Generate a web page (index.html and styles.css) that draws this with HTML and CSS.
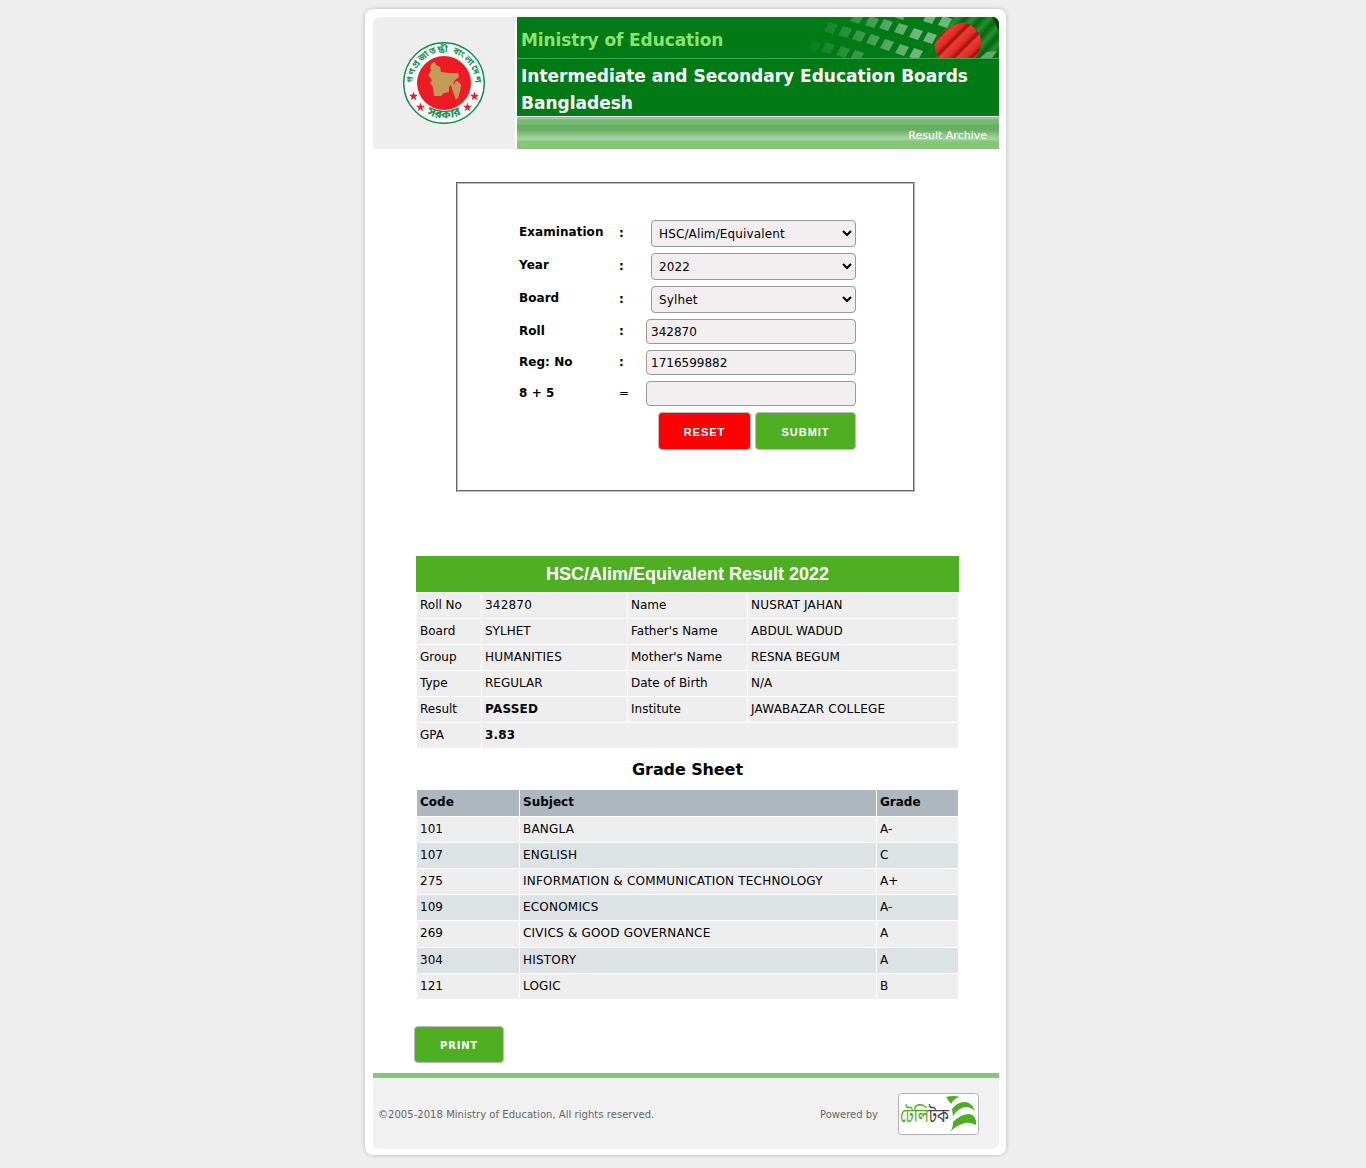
FILE: index.html
```html
<!DOCTYPE html>
<html lang="en">
<head>
<meta charset="utf-8">
<title>Intermediate and Secondary Education Boards Bangladesh</title>
<link rel="stylesheet" href="styles.css">
</head>
<body>
<div class="page">
  <header class="header">
    <div class="brand">
      <svg class="seal" viewBox="0 0 82 82" width="82" height="82">
        <circle cx="41" cy="41" r="40.3" fill="#fff" stroke="#16914f" stroke-width="1.5"/>
        <circle cx="41" cy="41" r="27" fill="#ed1c24"/>
        <path d="M29 21l3-1 1 3 4 2 1 5 8 1h9l1 4-4 3-2 4 4 1 2-3 2 3-1 7-2 5-2 3-3-8-2-7-2 2 0 5-5 1-3 3-7 0-1-9-3-4 2-3-4-5 3-4-1-4z" fill="#c49a5a"/>
        <path d="M52 40l3-1 1 9-1 9-2-5-2-8z" fill="#c49a5a"/>
        <path id="arcTop" d="M10 41a31 31 0 0 1 62 0" fill="none"/>
        <path id="arcBottom" d="M14 65a38 38 0 0 0 54 0" fill="none"/>
        <text class="seal-text"><textPath href="#arcTop" startOffset="0" textLength="97">গণপ্রজাতন্ত্রী বাংলাদেশ</textPath></text>
        <text class="seal-text low"><textPath href="#arcBottom" startOffset="50%" text-anchor="middle">সরকার</textPath></text>
        <g fill="#ed1c24">
          <path id="star" d="M10.500 49.500l1.100 3.300 3.400 0-2.700 2.100 1.100 3.400-2.900-2.100-2.900 2.100 1.100-3.400-2.700-2.100 3.400 0z"/>
          <use href="#star" x="7" y="11"/><use href="#star" x="61"/><use href="#star" x="54" y="11"/>
        </g>
      </svg>
    </div>
    <div class="banner">
      <div class="ministry">
        <span class="ministry-name">Ministry of Education</span>
        <svg class="flag" viewBox="0 0 210 41" width="210" height="41">
          <defs>
            <linearGradient id="fade"><stop offset="0" stop-color="#007a14"/><stop offset=".15" stop-color="#007a14" stop-opacity=".92"/><stop offset=".85" stop-color="#007a14" stop-opacity="0"/></linearGradient>
            <linearGradient id="folds" x1="147" y1="8" x2="156" y2="17" gradientUnits="userSpaceOnUse" spreadMethod="repeat"><stop offset="0" stop-color="#ef3b35"/><stop offset=".5" stop-color="#dd2b25"/><stop offset=".8" stop-color="#9c1109"/><stop offset="1" stop-color="#ef3b35"/></linearGradient>
            <linearGradient id="cloth" x1="0" y1="0" x2="9" y2="8" gradientUnits="userSpaceOnUse" spreadMethod="repeat"><stop offset="0" stop-color="#046410"/><stop offset=".5" stop-color="#24922e"/><stop offset="1" stop-color="#046410"/></linearGradient>
            <linearGradient id="edge"><stop offset="0" stop-color="#007a14"/><stop offset=".35" stop-color="#007a14" stop-opacity="0"/></linearGradient>
            <path id="tile" d="M-2-6l9 3-5 9-9-3z"/>
          </defs>
          <path d="M164 0h46v41h-74z" fill="url(#cloth)"/>
          <path d="M164 0h46v41h-74z" fill="url(#edge)"/>
          <g fill="#72b57e">
            <use href="#tile" x="68" y="1"/><use href="#tile" x="83" y="5"/><use href="#tile" x="97" y="8"/><use href="#tile" x="112" y="12"/><use href="#tile" x="127" y="17"/><use href="#tile" x="141" y="21"/>
            <use href="#tile" x="42" y="11"/><use href="#tile" x="56" y="15"/><use href="#tile" x="70" y="19"/><use href="#tile" x="84" y="23"/><use href="#tile" x="98" y="28"/><use href="#tile" x="113" y="33"/><use href="#tile" x="127" y="37"/>
            <use href="#tile" x="25" y="29"/><use href="#tile" x="39" y="31"/><use href="#tile" x="54" y="35"/><use href="#tile" x="68" y="39"/>
            <use href="#tile" x="112" y="-3"/><use href="#tile" x="141" y="1"/><use href="#tile" x="156" y="5"/>
          </g>
          <rect width="150" height="41" fill="url(#fade)"/>
          <path d="M203 0h7v14z" fill="#003f06"/>
          <path d="M198 35l10-1-5 7h-12z" fill="#5eaa69"/>
          <path d="M168 7q8-4 15 2 10 7 9 18-1 9-6 14h-35q-6-6-5-14 5-13 22-20z" fill="url(#folds)"/>
        </svg>
      </div>
      <h1 class="boards">Intermediate and Secondary Education Boards Bangladesh</h1>
      <nav class="bar"><a class="archive">Result Archive</a></nav>
    </div>
  </header>

  <main class="content">
    <form class="search">
      <label class="lbl">Examination</label><b class="sep">:</b><div class="ctl"><select class="pick"><option>HSC/Alim/Equivalent</option></select></div>
      <label class="lbl">Year</label><b class="sep">:</b><div class="ctl"><select class="pick"><option>2022</option></select></div>
      <label class="lbl">Board</label><b class="sep">:</b><div class="ctl"><select class="pick"><option>Sylhet</option></select></div>
      <label class="lbl short">Roll</label><b class="sep short">:</b><div class="ctl"><input class="entry" value="342870"></div>
      <label class="lbl short">Reg: No</label><b class="sep short">:</b><div class="ctl"><input class="entry" value="1716599882"></div>
      <label class="lbl short">8 + 5</label><span class="sep short">=</span><div class="ctl"><input class="entry"></div>
      <div class="actions"><button type="button" class="btn reset">RESET</button><button type="button" class="btn submit">SUBMIT</button></div>
    </form>

    <section class="result">
      <h2 class="result-title">HSC/Alim/Equivalent Result 2022</h2>
      <div class="info">
        <span>Roll No</span><span class="caps">342870</span><span>Name</span><span class="caps">NUSRAT JAHAN</span>
        <span class="up">Board</span><span class="up">SYLHET</span><span class="up">Father's Name</span><span class="up">ABDUL WADUD</span>
        <span>Group</span><span class="caps">HUMANITIES</span><span>Mother's Name</span><span>RESNA BEGUM</span>
        <span>Type</span><span>REGULAR</span><span>Date of Birth</span><span>N/A</span>
        <span>Result</span><span class="strong">PASSED</span><span>Institute</span><span class="caps">JAWABAZAR COLLEGE</span>
        <span>GPA</span><span class="strong wide">3.83</span>
      </div>
      <h3 class="sheet-title">Grade Sheet</h3>
      <div class="grades">
        <div class="row head"><span>Code</span><span>Subject</span><span>Grade</span></div>
        <div class="row"><span>101</span><span>BANGLA</span><span>A-</span></div>
        <div class="row alt"><span>107</span><span>ENGLISH</span><span>C</span></div>
        <div class="row"><span>275</span><span>INFORMATION &amp; COMMUNICATION TECHNOLOGY</span><span>A+</span></div>
        <div class="row alt"><span>109</span><span>ECONOMICS</span><span>A-</span></div>
        <div class="row tall"><span>269</span><span>CIVICS &amp; GOOD GOVERNANCE</span><span>A</span></div>
        <div class="row alt"><span>304</span><span>HISTORY</span><span>A</span></div>
        <div class="row"><span>121</span><span>LOGIC</span><span>B</span></div>
      </div>
    </section>
    <button type="button" class="btn print">PRINT</button>
  </main>

  <footer class="footer">
    <span class="copy">©2005-2018 Ministry of Education, All rights reserved.</span>
    <div class="powered"><span class="by">Powered by</span>
      <svg class="teletalk" viewBox="0 0 81 42" width="81" height="42">
        <rect x=".5" y=".5" width="80" height="41" rx="3" fill="#fff" stroke="#b0b0bd"/>
        <text x="2" y="29" class="tele" textLength="49" lengthAdjust="spacingAndGlyphs"><tspan fill="#4eae22">টেলি</tspan><tspan fill="#414150">টক</tspan></text>
        <path d="M48 4q7-2 14 0-6 1-9 7zM54 16q6-8 14-7 6 1 9 9-7-6-13-3-5 2-9 8zM52 39q3-4 3-10 8-8 16-8 8 1 7 11-8-4-14-1-6 2-12 8z" fill="#4eae22"/>
      </svg>
    </div>
  </footer>
</div>
</body>
</html>
```
FILE: styles.css
```css
* { box-sizing: border-box; }
body { margin: 0; padding-top: 9px; height: 1168px; background: #eee; color: #000; font: 12px "DejaVu Sans", Verdana, sans-serif; }
h1, h2, h3 { margin: 0; }
.page { width: 641px; height: 1146px; margin: 0 0 0 365px; padding: 8px 7px 6px 8px; background: #fff; border-radius: 8px; box-shadow: 0 0 4px rgba(0,0,0,.22); display: flex; flex-direction: column; }
.header { display: flex; gap: 2px; height: 132px; }
.brand { width: 142px; background: #eee; border-radius: 7px 0 0 0; display: flex; justify-content: center; padding-top: 25px; }
.seal-text { font: 700 9px "Noto Sans Bengali", "Noto Sans", sans-serif; fill: #16914f; }
.low { font-size: 12px; }
.banner { width: 482px; border-radius: 0 7px 0 0; overflow: hidden; }
.ministry { height: 42px; background: #007a14; border-bottom: 1px solid #4aa257; display: flex; justify-content: space-between; }
.ministry-name { padding: 13px 0 0 4px; font-size: 17px; line-height: 20px; font-weight: 700; color: #8be36f; white-space: nowrap; letter-spacing: -.1px; }
.boards { height: 58px; padding: 4px 0 0 4px; background: #007a14; border-bottom: 1px solid #fff; color: #fff; font-size: 17px; line-height: 27px; }
.bar { height: 32px; padding: 11px 12px 0 0; text-align: right; background: linear-gradient(#7fbf7b 0 1px, #a6d3a3 1px 2px, #77bb74 2px 7px, #68af62 8px, #68af62 13px, #9dcf99 20px, #a3d3a0 23px, #86c777 24px); }
.archive { font-size: 11px; line-height: 16px; color: #fff; }
.content { height: 924px; display: flex; flex-direction: column; align-items: flex-start; }
.search { margin: 33px 0 0 83px; width: 459px; height: 310px; border: 2px groove #bbb; padding: 36px 57px 0 61px; display: grid; grid-template-columns: 100px 20px 217px; grid-template-rows: 33px 33px 33px 31px 31px 31px 38px; }
.lbl { font-size: 12px; font-weight: 700; line-height: 25px; letter-spacing: .05px; }
.sep { font-size: 12px; line-height: 26px; }
.short { line-height: 24px; }
.ctl { display: flex; justify-content: flex-end; align-items: flex-start; }
.pick { width: 205px; height: 27px; padding: 0 3px; letter-spacing: .13px; }
.entry { width: 210px; height: 25px; padding: 0 4px; }
.pick, .entry { border: 1px solid #999; border-radius: 4px; background-color: #f3eef0; color: #000; font: 12px "DejaVu Sans", sans-serif; }
.actions { grid-column: 1 / -1; display: flex; justify-content: flex-end; gap: 4px; }
.btn { border: 1px solid #bbb; border-radius: 4px; padding: 1px 0 0; color: #fff; font: 700 11px "Liberation Sans", sans-serif; letter-spacing: 1px; background: #50ae22; }
.reset { width: 93px; height: 38px; background: red; }
.submit { width: 101px; height: 38px; }
.result { margin: 64px 0 0 43px; width: 543px; }
.result-title { height: 36px; background: #50ae22; color: #fff; text-align: center; font: 700 18px/36px "Liberation Sans", sans-serif; }
.info { margin: 1px 1px 0; display: grid; grid-template-columns: 64px 145px 119px 210px; gap: 1px; }
.info span { height: 25px; padding-left: 3px; background: #eee; line-height: 25px; }
.info .up { line-height: 24px; }
.info .caps { letter-spacing: .2px; }
.info .wide { grid-column: span 3; }
.strong { font-weight: 700; letter-spacing: .2px; }
.sheet-title { height: 42px; text-align: center; font-size: 16px; line-height: 44px; letter-spacing: -.1px; }
.grades { margin: 0 1px; display: flex; flex-direction: column; gap: 1px; }
.row { height: 25px; display: grid; grid-template-columns: 102px 356px 81px; gap: 1px; line-height: 25px; }
.row span { background: #eee; padding-left: 3px; white-space: nowrap; }
.row span:nth-child(2) { letter-spacing: .2px; }
.row.head { height: 26px; font-weight: 700; }
.head span:nth-child(n) { background: #aeb7be; letter-spacing: 0; }
.alt span { background: #dde2e5; }
.row.tall { height: 26px; }
.print { width: 90px; height: 37px; margin: 27px 0 0 41px; font: 700 10px "DejaVu Sans", sans-serif; letter-spacing: .8px; }
.footer { height: 76px; border-top: 5px solid #86c777; background: #f1f1f1; border-radius: 0 0 7px 7px; padding: 0 20px 0 5px; display: flex; justify-content: space-between; align-items: center; font-size: 10px; color: #666; box-shadow: inset 0 1px #fff; }
.copy { padding-top: 2px; letter-spacing: .04px; }
.by { padding-top: 2px; }
.powered { display: flex; align-items: center; gap: 20px; }
.tele { font: 400 19px "Noto Sans Bengali", "Noto Sans", sans-serif; }
```
